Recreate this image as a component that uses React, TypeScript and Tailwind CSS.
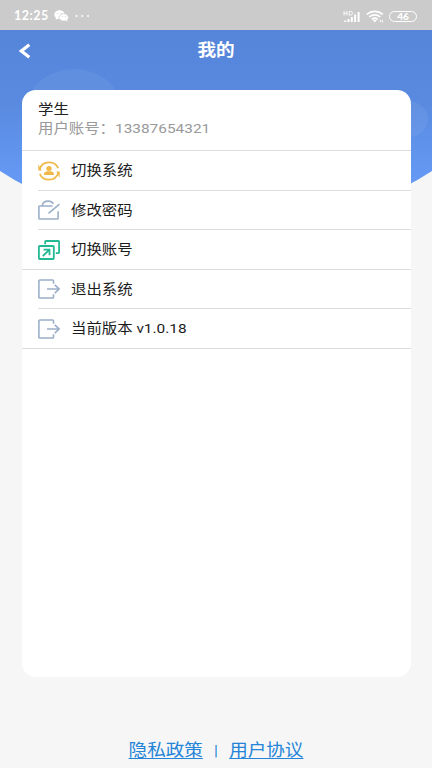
import React from 'react';

const SwitchSystemIcon = () => (
  <svg className="h-[20px] w-[22px] shrink-0" viewBox="0 0 22 20" fill="none" stroke="#f0b849" strokeWidth="1.7">
    <path d="M1.700 8C3 4 6.500 1.300 11 1.300c4.200 0 7.700 2.300 9.200 5.900M20.300 12C19 16 15.500 18.700 11 18.700c-4.200 0-7.700-2.300-9.200-5.900" />
    <path d="M.3 3.200v6.400h3.400zM21.700 16.800v-6.400h-3.400z" fill="#f0b849" stroke="none" />
    <ellipse cx="11" cy="7.400" rx="2.700" ry="2.500" fill="#f0b849" stroke="none" />
    <path d="M6 14.100v-.8c0-1.900 1.700-3 3.600-3h2.800c1.900 0 3.600 1.100 3.600 3v.8z" fill="#f0b849" stroke="none" />
  </svg>
);

const PasswordIcon = () => (
  <svg className="h-[20px] w-[22px] shrink-0" viewBox="0 0 22 20" fill="none" stroke="#9bb0c8" strokeWidth="1.6">
    <path d="M14.500 6H1.700C1.200 6 .9 6.400.9 7v11.200c0 .5.300.8.800.8h17.600c.5 0 .8-.3.800-.8v-7M4.200 6c.3-3 2.800-4.900 6-4.900 2.300 0 4.100.9 5.200 2.600M10.500 13.400 21.500 4.100" />
  </svg>
);

const SwitchAccountIcon = () => (
  <svg className="h-[20px] w-[22px] shrink-0" viewBox="0 0 22 20" fill="none" stroke="#22b993" strokeWidth="1.800">
    <path d="M7.200 4.300V1.800c0-.5.300-.8.800-.8h12.300c.5 0 .8.300.8.800v10.500c0 .5-.3.800-.8.800h-2.500" />
    <rect x=".9" y="6" width="14.900" height="13" rx=".8" />
    <path d="m4.800 16 6.200-5.800M5.600 9.700h5.900v5.600" />
  </svg>
);

const ExitIcon = () => (
  <svg className="h-[20px] w-[22px] shrink-0" viewBox="0 0 22 20" fill="none" stroke="#9bb0c8" strokeWidth="1.600">
    <path d="M15.500 4.800V1.800c0-.5-.3-.8-.8-.8H1.700c-.5 0-.8.300-.8.800v16.400c0 .5.300.8.800.8h13c.5 0 .8-.3.800-.8v-3M9 10h12M16.800 5.900 21 10l-4.200 4.100" />
  </svg>
);

const items = [
  { label: '切换系统', Icon: SwitchSystemIcon, full: false },
  { label: '修改密码', Icon: PasswordIcon, full: false },
  { label: '切换账号', Icon: SwitchAccountIcon, full: true },
  { label: '退出系统', Icon: ExitIcon, full: false },
  { label: '当前版本 v1.0.18', Icon: ExitIcon, full: true },
];

const Backdrop = () => (
  <svg className="absolute left-0 top-[30px] h-[200px] w-[432px]" viewBox="0 30 432 200">
    <defs>
      <linearGradient id="sky" x1="0" y1="30" x2="0" y2="190" gradientUnits="userSpaceOnUse">
        <stop offset="0" stopColor="#5585d9" />
        <stop offset=".45" stopColor="#598ae0" />
        <stop offset="1" stopColor="#669bf6" />
      </linearGradient>
      <clipPath id="hill"><path d="M0 30h432v141Q376 208 300 218H132Q56 208 0 171z" /></clipPath>
    </defs>
    <g clipPath="url(#hill)">
      <rect y="30" width="432" height="200" fill="url(#sky)" />
      <ellipse cx="74" cy="111" rx="48" ry="42" fill="#fff" fillOpacity=".06" />
      <ellipse cx="408" cy="119" rx="20" ry="18" fill="#fff" fillOpacity=".06" />
    </g>
  </svg>
);

const StatusBar = () => (
  <div className="flex h-[30px] items-center bg-[#cbcbcb] pl-[14px] pr-[15px] pt-[2px] text-white">
    <span className="w-[40px] whitespace-nowrap font-['Lato'] text-[12.500px] font-bold leading-none tracking-[0.5px]">12:25</span>
    <svg className="h-[12px] w-[15px]" viewBox="0 0 15 12" fill="#fff">
      <ellipse cx="5.500" cy="4.600" rx="5.200" ry="4.300" />
      <path d="m2 7-.3 2.700L5 8z" />
      <ellipse cx="9.800" cy="7.400" rx="4.700" ry="3.700" stroke="#cbcbcb" strokeWidth=".7" />
      <path d="m11.500 10.200 2 1.300-.3-2z" />
      <g fill="#cbcbcb"><circle cx="3.800" cy="3.500" r=".6" /><circle cx="7.200" cy="3.500" r=".6" /><circle cx="8.300" cy="6.500" r=".5" /><circle cx="11.300" cy="6.500" r=".5" /></g>
    </svg>
    <svg className="ml-[6px] h-[4px] w-[15px]" viewBox="0 0 15 4" fill="#fff"><circle cx="1.500" cy="2" r="1" /><circle cx="7.200" cy="2" r="1" /><circle cx="13" cy="2" r="1" /></svg>
    <svg className="ml-auto h-[13px] w-[18px]" viewBox="0 0 18 13" stroke="#fff" fill="none">
      <path d="M1 1v4.500M1 3.200h3M4 1v4.500M6.300 1.400v3.700h1.400c2.300 0 2.300-3.700 0-3.700z" strokeWidth=".9" />
      <path d="M2.200 10.500v1.500M5.500 9v3M8.800 7v5M12.100 4.500V12M15.600 2v10" strokeWidth="2" />
    </svg>
    <svg className="ml-[5px] h-[13px] w-[18px]" viewBox="0 0 18 13" stroke="#fff" fill="none" strokeWidth="1.700">
      <path d="M.8 4.300c4.500-3.800 11.500-3.800 16 0M3.300 6.900c3.200-2.700 7.800-2.700 11 0M5.800 9.300c1.700-1.400 4.300-1.400 6 0" />
      <path d="m6.500 9.700 2.300 2.800 2.300-2.800z" fill="#fff" stroke="none" />
      <path d="M14.300 9.500v2.500M16.300 12.500V10" strokeWidth="1" />
    </svg>
    <span className="ml-[5px] flex h-[11px] w-[28px] items-center justify-center rounded-full border-[1.500px] border-white font-['Lato'] text-[10px] font-black leading-none">46</span>
  </div>
);

export default function App() {
  return (
    <div className="relative flex h-[768px] w-[432px] flex-col overflow-hidden bg-[#f6f6f6] font-['Roboto','Noto_Sans_CJK_SC',sans-serif]">
      <Backdrop />
      <StatusBar />
      <header className="relative flex h-[60px] items-start pt-[11px]">
        <svg className="ml-[18px] mt-[2px] h-[16px] w-[14px]" viewBox="0 0 14 16" fill="none" stroke="#fff" strokeWidth="3.200"><path d="M11.300 1.700 3.300 8l8 6.300" /></svg>
        <h1 className="ml-[-32px] flex-1 scale-x-[1.125] text-center text-[16.500px] font-bold leading-[20px] text-white">我的</h1>
      </header>
      <main className="relative ml-[22px] h-[587px] w-[389px] rounded-[14px] bg-white">
        <div className="h-[61px] border-b border-[#dcdcdc] pl-[16px] pt-[10px]">
          <div className="origin-left scale-x-[1.125] text-[13.700px] leading-[18px] text-[#222]">学生</div>
          <div className="origin-left scale-x-[1.125] whitespace-nowrap text-[13.700px] leading-[20px] text-[#999]">用户账号：13387654321</div>
        </div>
        {items.map(({ label, Icon, full }) => (
          <div key={label} className="relative flex h-[39.500px] items-center pl-[16px]">
            <Icon />
            <span className="-mt-px ml-[11px] origin-left scale-x-[1.125] whitespace-nowrap text-[13.700px] leading-[20px] text-[#1c1c1c]">{label}</span>
            <i className={`absolute bottom-0 right-0 h-px bg-[#dcdcdc] ${full ? 'left-0' : 'left-[16px]'}`} />
          </div>
        ))}
      </main>
      <footer className="mt-[62px] flex origin-center scale-x-[1.125] items-center justify-center text-[16.500px] leading-[24px] text-[#2484d8]">
        <a className="underline underline-offset-2">隐私政策</a>
        <span className="mx-[10px] text-[14px]">|</span>
        <a className="underline underline-offset-2">用户协议</a>
      </footer>
    </div>
  );
}
